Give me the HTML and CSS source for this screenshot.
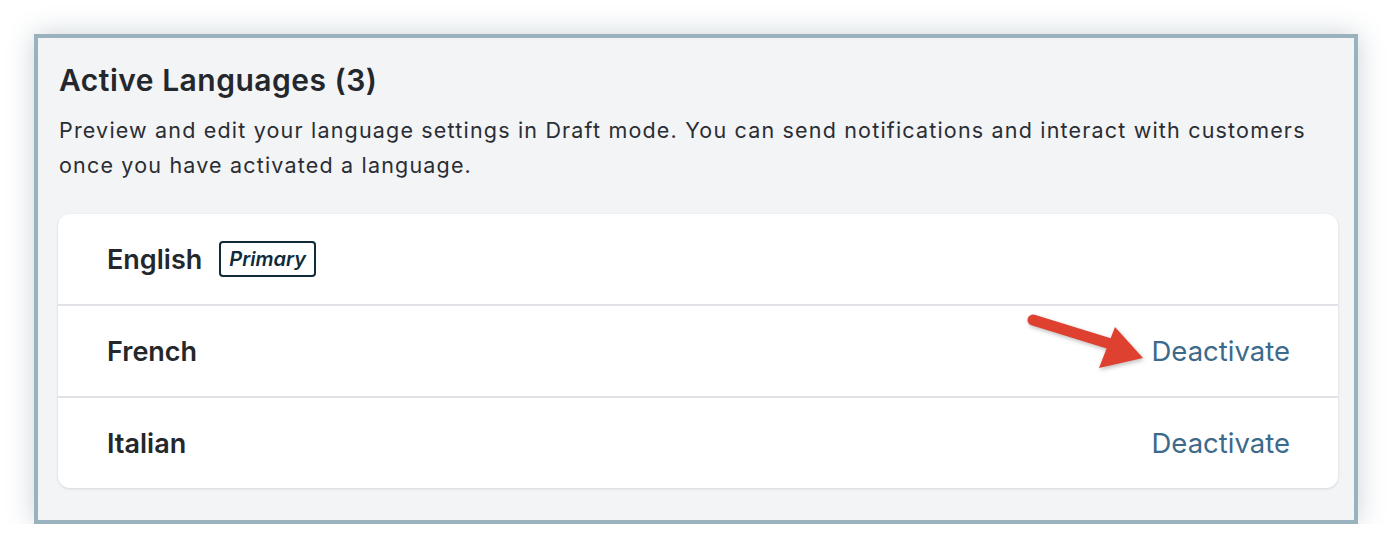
FILE: index.html
```html
<!DOCTYPE html>
<html lang="en">

<head>
    <meta charset="UTF-8">
    <meta name="viewport" content="width=device-width, initial-scale=1.0">
    <title>Active Languages</title>
    <link rel="stylesheet" href="styles.css">
</head>

<body>
    <div class="frame">
        <h2 class="title">Active Languages (3)</h2>
        <p class="intro">Preview and edit your language settings in Draft mode. You can send notifications and interact with customers
            once you have activated a language.</p>

        <ul class="languages">
            <li class="language">
                <span class="name">English</span>
                <span class="badge">Primary</span>
            </li>
            <li class="language">
                <span class="name">French</span>
                <a class="deactivate" href="#">Deactivate</a>
                <!-- annotation arrow pointing at the link -->
                <svg class="arrow" width="130" height="64" viewBox="0 0 130 64">
                    <line x1="9" y1="6" x2="90" y2="31" stroke="#df4130" stroke-width="11" stroke-linecap="round" />
                    <polygon points="91,13 119,44 75,54" fill="#df4130" />
                </svg>
            </li>
            <li class="language">
                <span class="name">Italian</span>
                <a class="deactivate" href="#">Deactivate</a>
            </li>
        </ul>
    </div>
</body>

</html>
```

FILE: styles.css
```css
body {
    margin: 0;
    background: #ffffff;
    font-family: Inter, "Noto Sans", sans-serif;
    color: #24272c;
}

.frame {
    box-sizing: border-box;
    width: 1324px;
    height: 490px;
    margin: 34px 0 0 34px;
    padding: 22px 16px 0 20px;
    background: #f3f4f6;
    border: 4px solid #9ab1be;
    box-shadow: 0 0 26px rgba(70, 100, 120, 0.28);
}

.title {
    margin: 0 0 0 1px;
    font-size: 30px;
    font-weight: 600;
    line-height: 40px;
    letter-spacing: 0.5px;
}

.intro {
    margin: 13px 0 0 1px;
    font-size: 21.5px;
    line-height: 35px;
    letter-spacing: 1.18px;
    color: #2a2d33;
}

.languages {
    list-style: none;
    margin: 31px 0 0 0;
    padding: 0;
    background: #ffffff;
    border-radius: 12px;
    box-shadow: 0 1px 3px rgba(0, 0, 0, 0.12);
}

.language {
    position: relative;
    display: flex;
    align-items: center;
    height: 90px;
    padding: 0 48px 0 49px;
    border-bottom: 2px solid #e1e2e7;
}

.language:last-child {
    border-bottom: none;
}

.name {
    font-size: 27px;
    font-weight: 600;
}

.badge {
    margin-left: 17px;
    padding: 4px 8px;
    border: 2px solid #0f2b3a;
    border-radius: 4px;
    font-size: 20px;
    font-weight: 600;
    font-style: italic;
    color: #0f2b3a;
}

.deactivate {
    margin-left: auto;
    font-size: 27.5px;
    color: #3b6a8b;
    text-decoration: none;
}

.arrow {
    position: absolute;
    left: 966px;
    top: 8px;
    filter: drop-shadow(1px 2px 2px rgba(0, 0, 0, 0.25));
}
```
